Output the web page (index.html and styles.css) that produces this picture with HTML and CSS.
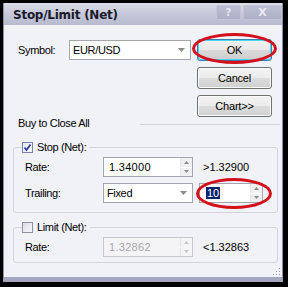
FILE: index.html
```html
<!DOCTYPE html>
<html>
<head>
<meta charset="utf-8">
<link rel="stylesheet" href="styles.css">
</head>
<body>
<div class="window">
  <div class="frame">
    <div class="titlebar">
      <span class="title">Stop/Limit (Net)</span>
      <span class="cap-btn help">?</span>
      <span class="cap-btn close">X</span>
    </div>
    <div class="body">
      <div class="top">
        <div class="symbol-row">
          <span class="lbl sym-lbl">Symbol:</span>
          <div class="combo sym-combo">
            <span class="val">EUR/USD</span>
            <span class="drop"><svg width="7" height="4" viewBox="0 0 7 4"><polygon points="0,0 7,0 3.5,4" fill="#8a8a8a"/></svg></span>
          </div>
        </div>
        <div class="buttons">
          <div class="btn ok">OK<span class="ring ring-ok"></span></div>
          <div class="btn">Cancel</div>
          <div class="btn">Chart&gt;&gt;</div>
        </div>
      </div>
      <div class="buy-row"><span>Buy to Close All</span><span class="rule"></span></div>

      <fieldset class="group stop">
        <legend><span class="check checked"><svg width="9" height="9" viewBox="0 0 9 9"><path d="M1.5 4.5 L3.5 7 L7.5 1.5" fill="none" stroke="#2b3f9e" stroke-width="1.8"/></svg></span><span>Stop (Net):</span></legend>
        <div class="row">
          <span class="lbl">Rate:</span>
          <div class="spin">
            <span class="val num">1.34000</span>
            <span class="arrows"><span class="arr"><svg width="5" height="3" viewBox="0 0 5 3"><polygon points="0,3 5,3 2.5,0" fill="#8a8a8a"/></svg></span><span class="arr"><svg width="5" height="3" viewBox="0 0 5 3"><polygon points="0,0 5,0 2.5,3" fill="#8a8a8a"/></svg></span></span>
          </div>
          <span class="hint">&gt;1.32900</span>
        </div>
        <div class="row">
          <span class="lbl">Trailing:</span>
          <div class="combo">
            <span class="val">Fixed</span>
            <span class="drop"><svg width="7" height="4" viewBox="0 0 7 4"><polygon points="0,0 7,0 3.5,4" fill="#8a8a8a"/></svg></span>
          </div>
          <div class="spin trail">
            <span class="val"><span class="sel">10</span></span>
            <span class="arrows"><span class="arr"><svg width="5" height="3" viewBox="0 0 5 3"><polygon points="0,3 5,3 2.5,0" fill="#8a8a8a"/></svg></span><span class="arr"><svg width="5" height="3" viewBox="0 0 5 3"><polygon points="0,0 5,0 2.5,3" fill="#8a8a8a"/></svg></span></span>
            <span class="ring ring-trail"></span>
          </div>
        </div>
      </fieldset>

      <fieldset class="group limit">
        <legend><span class="check"></span><span>Limit (Net):</span></legend>
        <div class="row">
          <span class="lbl">Rate:</span>
          <div class="spin disabled">
            <span class="val num">1.32862</span>
            <span class="arrows"><span class="arr"><svg width="5" height="3" viewBox="0 0 5 3"><polygon points="0,3 5,3 2.5,0" fill="#c4c4c4"/></svg></span><span class="arr"><svg width="5" height="3" viewBox="0 0 5 3"><polygon points="0,0 5,0 2.5,3" fill="#c4c4c4"/></svg></span></span>
          </div>
          <span class="hint">&lt;1.32863</span>
        </div>
      </fieldset>

      <div class="grip-row">
        <svg class="grip" width="9" height="9" viewBox="0 0 9 9">
          <rect x="7" y="1" width="1" height="1" fill="#9a9aa8"/>
          <rect x="4" y="4" width="1" height="1" fill="#9a9aa8"/>
          <rect x="7" y="4" width="1" height="1" fill="#9a9aa8"/>
          <rect x="1" y="7" width="1" height="1" fill="#9a9aa8"/>
          <rect x="4" y="7" width="1" height="1" fill="#9a9aa8"/>
          <rect x="7" y="7" width="1" height="1" fill="#9a9aa8"/>
        </svg>
      </div>
    </div>
  </div>
</div>
</body>
</html>
```
FILE: styles.css
```css
* { box-sizing: border-box; }
html, body { margin: 0; padding: 0; }
body {
  width: 288px;
  height: 287px;
  overflow: hidden;
  background: #000;
  font-family: "Liberation Sans", Arial, sans-serif;
  font-size: 11px;
  color: #000;
}
.window {
  width: 288px;
  height: 287px;
  background: #000;
  padding: 3px 5px 5px 3px;
}
.frame {
  height: 279px;
  border-left: 1px solid #8e90ab;
  border-right: 1px solid #8e90ab;
  border-bottom: 5px solid #a4a6bf;
  display: flex;
  flex-direction: column;
}
.titlebar {
  height: 22px;
  flex: none;
  background: linear-gradient(#dcdde8, #c6c8da 50%, #b8bacf);
  display: flex;
  align-items: center;
  padding-left: 9px;
}
.title {
  font-family: "DejaVu Sans", Verdana, sans-serif;
  font-weight: bold;
  font-size: 12px;
  letter-spacing: -0.25px;
  color: #1a1a2a;
  margin-top: 1px;
}
.cap-btn {
  height: 15px;
  margin-top: -3px;
  display: flex;
  align-items: center;
  justify-content: center;
  color: #e9eaf3;
  font-family: "DejaVu Sans", Verdana, sans-serif;
  font-weight: bold;
  font-size: 10px;
  background: linear-gradient(#bcbed2, #aeb0c7);
  border: 1px solid #c3c5d7;
  border-radius: 2px;
}
.help { width: 25px; margin-left: auto; }
.close { width: 39px; margin-left: 2px; margin-right: 0; font-size: 11px; }

.body {
  flex: 1;
  background: #f1f1f8;
  padding-top: 14px;
  display: flex;
  flex-direction: column;
  letter-spacing: -0.35px;
}
.top {
  display: flex;
  height: 78px;
}
.symbol-row {
  display: flex;
  align-items: center;
  height: 20px;
  margin-top: 1px;
  margin-left: 14px;
}
.sym-lbl { width: 51px; }
.combo {
  width: 90px;
  height: 20px;
  background: #fff;
  border: 1px solid #a3a5b0;
  display: flex;
  align-items: center;
}
.sym-combo { width: 122px; }
.combo .val { flex: 1; padding-left: 3px; }
.drop {
  width: 16px;
  height: 18px;
  display: flex;
  align-items: center;
  justify-content: center;
  margin-right: 1px;
}
.buttons {
  margin-left: auto;
  margin-right: 10px;
  display: flex;
  flex-direction: column;
  gap: 6px;
}
.btn {
  position: relative;
  width: 75px;
  height: 22px;
  border: 1px solid #707070;
  border-radius: 3px;
  background: linear-gradient(#f4f4f4, #ebebeb 50%, #dddddd 51%, #cfcfcf);
  box-shadow: inset 0 0 0 1px #fbfbfb;
  display: flex;
  align-items: center;
  justify-content: center;
  letter-spacing: -0.2px;
}
.btn.ok {
  border-color: #3c7fb1;
  box-shadow: inset 0 0 0 1px #48d3f8;
  background: linear-gradient(#f2f2f2, #e8e8e8 50%, #dadada 51%, #cdcdcd);
}
.ring {
  position: absolute;
  border: 3px solid #d4101a;
  border-radius: 50%;
  pointer-events: none;
}
.ring-ok {
  left: -6px;
  top: -7px;
  width: 85px;
  height: 31px;
}
.ring-trail {
  left: -4px;
  top: -6px;
  width: 76px;
  height: 31px;
}
.buy-row {
  display: flex;
  align-items: center;
  height: 12px;
  margin-left: 14px;
  margin-right: 2px;
}
.rule {
  margin-left: auto;
  width: 140px;
  height: 1px;
  background: #d2d2dc;
  margin-top: 2px;
}
.group {
  margin: 12px 4px 0 9px;
  padding: 4px 0 9px 7px;
  border: 1px solid #d3d4de;
  border-radius: 3px;
  min-width: 0;
}
.group legend {
  padding: 0 3px 0 0;
  height: 12px;
  display: flex;
  align-items: center;
  margin-left: 1px;
}
.check {
  width: 11px;
  height: 11px;
  border: 1px solid #8f90a6;
  background: linear-gradient(135deg, #dcdce4, #f8f8fb);
  margin-right: 4px;
  display: flex;
  align-items: center;
  justify-content: center;
}
.check.checked {
  border-color: #7b82b0;
  background: linear-gradient(135deg, #e4e6f2, #ffffff);
}
.limit { margin-top: 8px; padding-top: 4px; padding-bottom: 5px; }
.row {
  display: flex;
  align-items: center;
  height: 20px;
  margin-left: 4px;
}
.row + .row { margin-top: 6px; }
.row .lbl { width: 78px; }
.spin {
  position: relative;
  width: 90px;
  height: 20px;
  background: #fff;
  border: 1px solid #a3a5b0;
  display: flex;
  align-items: center;
}
.spin .val { flex: 1; padding-left: 5px; }
.num { letter-spacing: 0.3px; }
.arrows {
  width: 12px;
  height: 18px;
  display: flex;
  flex-direction: column;
  gap: 1px;
  margin-right: 0;
}
.arr {
  flex: 1;
  display: flex;
  align-items: center;
  justify-content: center;
  background: #f0f0f3;
  border-left: 1px solid #e4e4ea;
}
.hint { margin-left: 10px; letter-spacing: 0; }
.trail {
  width: 64px;
  margin-left: 6px;
}
.trail .val { padding-left: 6px; }
.sel {
  background: #0a246a;
  color: #fff;
  padding: 0 1px;
  letter-spacing: 0;
}
.spin.disabled { background: #f4f4f6; border-color: #c6c7cf; }
.spin.disabled .val { color: #a6a6ad; }
.spin.disabled .arr { background: #f4f4f6; }
.grip-row {
  margin-top: auto;
  display: flex;
  justify-content: flex-end;
  padding: 0 1px 1px 0;
}
```
